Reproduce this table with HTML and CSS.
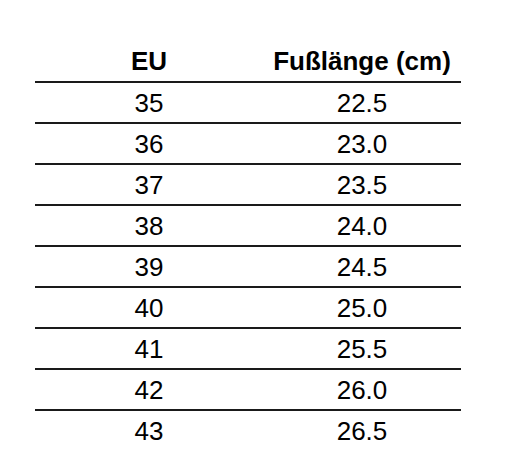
FILE: index.html
```html
<!DOCTYPE html>
<html lang="de">
<head>
<meta charset="utf-8">
<title>Größentabelle</title>
<link rel="stylesheet" href="styles.css">
</head>
<body>
<table class="size-table">
  <thead>
    <tr><th class="col-eu">EU</th><th class="col-len">Fußlänge (cm)</th></tr>
  </thead>
  <tbody>
    <tr><td>35</td><td>22.5</td></tr>
    <tr><td>36</td><td>23.0</td></tr>
    <tr><td>37</td><td>23.5</td></tr>
    <tr><td>38</td><td>24.0</td></tr>
    <tr><td>39</td><td>24.5</td></tr>
    <tr><td>40</td><td>25.0</td></tr>
    <tr><td>41</td><td>25.5</td></tr>
    <tr><td>42</td><td>26.0</td></tr>
    <tr><td>43</td><td>26.5</td></tr>
  </tbody>
</table>
</body>
</html>
```
FILE: styles.css
```css
html, body {
  margin: 0;
  padding: 0;
  background: #ffffff;
}
body {
  padding: 42px 0 0 35px;
  font-family: "Liberation Sans", Arial, sans-serif;
  color: #000;
}
.size-table {
  border-collapse: collapse;
  width: 426px;
  table-layout: fixed;
}
.col-eu { width: 228px; }
.col-len { width: 198px; }
.size-table th,
.size-table td {
  padding: 0;
  text-align: center;
  font-size: 26px;
  white-space: nowrap;
}
.size-table th {
  font-weight: bold;
  height: 39px;
  line-height: 39px;
  border-bottom: 2px solid #1a1a1a;
  box-sizing: border-box;
}
.size-table td {
  height: 39px;
  line-height: 37px;
  padding-top: 2px;
  box-sizing: border-box;
  border-bottom: 2px solid #1a1a1a;
}
.size-table tbody tr:last-child td {
  border-bottom: none;
}
```
